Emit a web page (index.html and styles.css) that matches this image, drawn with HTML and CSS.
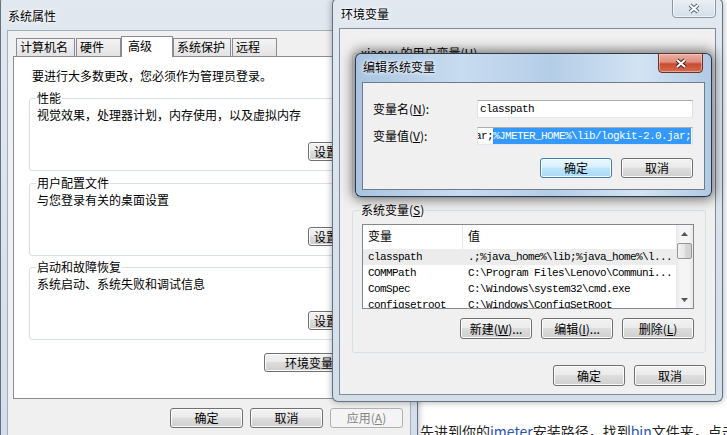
FILE: index.html
```html
<!DOCTYPE html>
<html lang="zh-CN">
<head>
    <meta charset="UTF-8">
    <title>环境变量</title>
    <link rel="stylesheet" href="styles.css">
</head>
<body>
    <!-- web page behind the dialogs -->
    <p class="page-text">先进到你的<a href="#">jmeter</a>安装路径，找到<a href="#">bin</a>文件夹，点击</p>

    <!-- 系统属性 -->
    <div class="win sys">
        <div class="titlebar"><span class="title">系统属性</span></div>
        <div class="client">
            <div class="tabs">
                <div class="tab t1">计算机名</div>
                <div class="tab t2">硬件</div>
                <div class="tab t3 active">高级</div>
                <div class="tab t4">系统保护</div>
                <div class="tab t5">远程</div>
            </div>
            <div class="panel">
                <p class="intro">要进行大多数更改，您必须作为管理员登录。</p>
                <fieldset class="group g1">
                    <legend>性能</legend>
                    <p>视觉效果，处理器计划，内存使用，以及虚拟内存</p>
                    <button class="btn">设置(<u>S</u>)...</button>
                </fieldset>
                <fieldset class="group g2">
                    <legend>用户配置文件</legend>
                    <p>与您登录有关的桌面设置</p>
                    <button class="btn">设置(<u>E</u>)...</button>
                </fieldset>
                <fieldset class="group g3">
                    <legend>启动和故障恢复</legend>
                    <p>系统启动、系统失败和调试信息</p>
                    <button class="btn">设置(<u>T</u>)...</button>
                </fieldset>
                <button class="btn env-btn">环境变量(<u>N</u>)...</button>
            </div>
            <div class="actions">
                <button class="btn">确定</button>
                <button class="btn">取消</button>
                <button class="btn" disabled>应用(<u>A</u>)</button>
            </div>
        </div>
    </div>

    <!-- 环境变量 -->
    <div class="win env">
        <div class="titlebar"><span class="title">环境变量</span></div>
        <button class="close-btn">
            <svg width="14" height="11" viewBox="0 0 14 11"><path d="M3 2 L11 9 M11 2 L3 9" stroke="#5d6b7a" stroke-width="4"/><path d="M3 2 L11 9 M11 2 L3 9" stroke="#fff" stroke-width="2"/></svg>
        </button>
        <div class="client">
            <fieldset class="group user-vars">
                <legend>xiaoyu 的用户变量(<u>U</u>)</legend>
                <div class="user-list"></div>
            </fieldset>
            <fieldset class="group sys-vars">
                <legend>系统变量(<u>S</u>)</legend>
                <div class="list">
                    <div class="list-body">
                        <div class="list-head"><span class="col-name">变量</span><span class="col-value">值</span></div>
                        <div class="list-row hot"><span class="col-name">classpath</span><span class="col-value">.;%java_home%\lib;%java_home%\l...</span></div>
                        <div class="list-row"><span class="col-name">COMMPath</span><span class="col-value">C:\Program Files\Lenovo\Communi...</span></div>
                        <div class="list-row"><span class="col-name">ComSpec</span><span class="col-value">C:\Windows\system32\cmd.exe</span></div>
                        <div class="list-row"><span class="col-name">configsetroot</span><span class="col-value">C:\Windows\ConfigSetRoot</span></div>
                    </div>
                    <div class="scrollbar">
                        <div class="sb-arrow"><svg width="7" height="4" viewBox="0 0 7 4"><path d="M0 4 L3.5 0 L7 4z" fill="#555"/></svg></div>
                        <div class="sb-thumb"></div>
                        <div class="sb-track"></div>
                        <div class="sb-arrow"><svg width="7" height="4" viewBox="0 0 7 4"><path d="M0 0 L3.5 4 L7 0z" fill="#555"/></svg></div>
                    </div>
                </div>
                <div class="btn-row">
                    <button class="btn">新建(<u>W</u>)...</button>
                    <button class="btn">编辑(<u>I</u>)...</button>
                    <button class="btn">删除(<u>L</u>)</button>
                </div>
            </fieldset>
            <div class="btn-row dialog-actions">
                <button class="btn">确定</button>
                <button class="btn">取消</button>
            </div>
        </div>
    </div>

    <!-- 编辑系统变量 -->
    <div class="win edit">
        <div class="titlebar"><span class="title">编辑系统变量</span></div>
        <button class="close-btn red">
            <svg width="14" height="11" viewBox="0 0 14 11"><path d="M3 2 L11 9 M11 2 L3 9" stroke="#4a2620" stroke-width="4"/><path d="M3 2 L11 9 M11 2 L3 9" stroke="#fff" stroke-width="2"/></svg>
        </button>
        <div class="client">
            <div class="field-grid">
                <label>变量名(<u>N</u>):</label>
                <div class="textbox"><span class="mono">classpath</span></div>
                <label>变量值(<u>V</u>):</label>
                <div class="textbox scrolled"><span class="mono">ar;</span><span class="mono sel">%JMETER_HOME%\lib/logkit-2.0.jar;</span></div>
            </div>
            <div class="btn-row">
                <button class="btn default">确定</button>
                <button class="btn">取消</button>
            </div>
        </div>
    </div>
</body>
</html>
```

FILE: styles.css
```css
body {
    margin: 0;
    width: 727px;
    height: 435px;
    overflow: hidden;
    position: relative;
    background-color: #fff;
    font-family: "Noto Sans CJK SC", sans-serif;
    font-size: 12px;
    line-height: 16px;
    color: #000;
}

u {
    text-decoration: underline;
}

.page-text {
    position: absolute;
    left: 420px;
    top: 421px;
    margin: 0;
    font-size: 14px;
    line-height: 20px;
    white-space: nowrap;
    color: #222;
}

.page-text a {
    color: #2a55b8;
    text-decoration: none;
}

.mono {
    font-family: "Liberation Mono", monospace;
    font-size: 11px;
    letter-spacing: -0.6px;
}

/* windows */
.win {
    position: absolute;
    box-sizing: border-box;
    display: flex;
    flex-direction: column;
    border: 1px solid rgba(60, 75, 95, 0.75);
    border-radius: 6px;
    background: linear-gradient(#e1e8f0, #d4dee9);
    box-shadow: 0 0 7px rgba(0, 0, 0, 0.35);
}

.titlebar {
    box-sizing: border-box;
    display: flex;
    align-items: center;
    flex-shrink: 0;
}

.title {
    color: #000;
    text-shadow: 0 0 6px #fff, 0 0 3px #fff;
}

.client {
    flex: 1;
    margin: 0 6px 6px;
    border: 1px solid #7f8b98;
    background-color: #f0f0f0;
    min-height: 0;
}

.close-btn {
    position: absolute;
    top: -1px;
    box-sizing: border-box;
    padding: 0;
    display: flex;
    align-items: center;
    justify-content: center;
    border: 1px solid #8a96a4;
    border-radius: 0 0 4px 4px;
    background: linear-gradient(#eaf0f5, #d5dee8);
    box-shadow: inset 0 0 0 1px rgba(255, 255, 255, 0.6);
}

.close-btn.red {
    border-color: #6b3028;
    background: linear-gradient(#eab0a4 0%, #de8d7c 45%, #c84a32 55%, #d36c4f 100%);
    box-shadow: inset 0 0 0 1px rgba(255, 220, 210, 0.5);
}

/* buttons */
.btn {
    box-sizing: border-box;
    width: 72px;
    height: 20px;
    padding: 0;
    font-family: "Noto Sans CJK SC", sans-serif;
    font-size: 12px;
    line-height: 16px;
    color: #000;
    white-space: nowrap;
    border: 1px solid #707070;
    border-radius: 3px;
    background: linear-gradient(#f2f2f2 0%, #ebebeb 45%, #dddddd 50%, #cfcfcf 100%);
    box-shadow: inset 0 0 0 1px #fbfbfb;
}

.btn.default {
    border-color: #3c7fb1;
    background: linear-gradient(#eaf6fd 0%, #d9f0fc 45%, #bee6fd 50%, #a7d9f5 100%);
    box-shadow: inset 0 0 0 1px #fff;
}

.btn:disabled {
    border-color: #adb2b5;
    background: #f4f4f4;
    color: #838383;
    box-shadow: none;
}

.btn-row {
    display: flex;
    justify-content: flex-end;
    gap: 9px;
}

/* groups */
.group {
    box-sizing: border-box;
    min-width: 0;
    margin: 0;
    padding: 0 6px 9px 6px;
    border: 1px solid #d5dfe5;
    border-radius: 3px;
}

.group legend {
    padding: 0 1px;
    line-height: 16px;
}

.group p {
    margin: 1px 0 0 1px;
    line-height: 16px;
}

/* 系统属性 */
.sys {
    left: 0;
    top: -4px;
    width: 418px;
    height: 450px;
}

.sys .titlebar {
    height: 33px;
    padding: 5px 0 0 7px;
}

.sys .client {
    border-color: #a3aebb;
    padding: 5px 5px 0 5px;
}

.tabs {
    display: flex;
    align-items: flex-end;
    height: 20px;
    padding-left: 3px;
}

.tab {
    box-sizing: border-box;
    height: 18px;
    padding-left: 3px;
    line-height: 16px;
    border: 1px solid #898c95;
    border-bottom: none;
    background: linear-gradient(#f4f4f4, #e2e2e2);
    white-space: nowrap;
}

.tab.active {
    position: relative;
    z-index: 1;
    height: 21px;
    margin-bottom: -1px;
    padding-left: 6px;
    line-height: 17px;
    background: #fff;
}

.t1 { width: 59px; }
.t2 { width: 45px; margin-left: 1px; }
.t3 { width: 52px; }
.t4 { width: 58px; }
.t5 { width: 45px; margin-left: 1px; }

.panel {
    box-sizing: border-box;
    height: 343px;
    padding: 11px 14px 0 15px;
    border: 1px solid #898c95;
    background-color: #fff;
}

.intro {
    margin: 0 0 0 3px;
}

.panel .group {
    width: 361px;
}

.g1 { margin-top: 6px; }
.g2 { margin-top: 4px; }
.g3 { margin-top: 3px; }

.panel .group .btn {
    display: block;
    width: 75px;
    height: 19px;
    margin: 19px 0 0 auto;
    padding-left: 5px;
    text-align: left;
}

.env-btn {
    display: block;
    width: 126px;
    height: 19px;
    margin: 13px 0 0 auto;
    padding-left: 20px;
    text-align: left;
}

.actions {
    display: flex;
    justify-content: flex-end;
    gap: 7px;
    margin-top: 9px;
    padding-right: 2px;
}

.actions .btn {
    width: 73px;
}

/* 环境变量 */
.env {
    left: 332px;
    top: -2px;
    width: 391px;
    height: 404px;
}

.env .titlebar {
    height: 29px;
    padding: 1px 0 0 8px;
}

.env .close-btn {
    right: 6px;
    width: 44px;
    height: 20px;
}

.env .client {
    padding: 16px 9px 0 12px;
}

.env .group {
    padding: 0 11px 13px 9px;
}

.env .group legend {
    margin-left: -2px;
}

.user-vars {
    padding-bottom: 0 !important;
}

.user-list {
    height: 136px;
}

.sys-vars {
    margin-top: 4px;
}

.list {
    box-sizing: border-box;
    display: flex;
    height: 85px;
    margin-top: 6px;
    border: 1px solid #828790;
    background-color: #fff;
}

.list-body {
    flex: 1;
    overflow: hidden;
}

.list-head {
    display: flex;
    height: 24px;
    line-height: 22px;
}

.list-head .col-name {
    border-right: 1px solid #e3e5e8;
}

.list-row {
    display: flex;
    height: 16px;
    line-height: 16px;
    font-family: "Liberation Mono", monospace;
    font-size: 11px;
    letter-spacing: -0.6px;
    white-space: nowrap;
}

.list-row.hot {
    background-color: #ececec;
}

.col-name {
    box-sizing: border-box;
    width: 100px;
    flex-shrink: 0;
    padding-left: 5px;
}

.col-value {
    padding-left: 5px;
}

.scrollbar {
    width: 17px;
    display: flex;
    flex-direction: column;
    background: linear-gradient(90deg, #e9e9e9, #f5f5f5 25%, #f5f5f5 75%, #e9e9e9);
}

.sb-arrow {
    height: 17px;
    display: flex;
    align-items: center;
    justify-content: center;
    flex-shrink: 0;
}

.sb-thumb {
    height: 16px;
    margin: 1px 1px 0;
    border: 1px solid #979797;
    border-radius: 2px;
    box-sizing: border-box;
    background: linear-gradient(90deg, #f2f2f2, #e6e6e6 50%, #d8d8d8 51%, #d0d0d0);
}

.sb-track {
    flex: 1;
}

.sys-vars .btn-row {
    margin-top: 9px;
}

.sys-vars .btn,
.dialog-actions .btn {
    height: 21px;
}

.dialog-actions {
    margin-top: 12px;
}

/* 编辑系统变量 */
.edit {
    left: 355px;
    top: 53px;
    width: 357px;
    height: 144px;
    border-color: rgba(20, 30, 45, 0.85);
    background: linear-gradient(90deg, #a8c4e1 0%, #c8dcf0 30%, #b4cde7 55%, #d3e3f3 80%, #b0cae5 100%);
    box-shadow: 0 0 12px 3px rgba(0, 0, 0, 0.5);
}

.edit .titlebar {
    height: 28px;
    padding: 0 0 2px 7px;
}

.edit .close-btn {
    right: 8px;
    width: 45px;
    height: 20px;
}

.edit .client {
    padding: 17px 11px 0 10px;
    border-color: #6f7b88;
}

.field-grid {
    display: grid;
    grid-template-columns: 104px 216px;
    grid-auto-rows: 18px;
    row-gap: 9px;
    align-items: center;
}

.textbox {
    box-sizing: border-box;
    height: 18px;
    display: flex;
    align-items: center;
    overflow: hidden;
    white-space: nowrap;
    padding: 0 1px 0 2px;
    border: 1px solid;
    border-color: #abadb3 #dbdfe6 #e3e9ef #e2e3ea;
    background-color: #fff;
}

.textbox span {
    flex-shrink: 0;
}

.textbox.scrolled {
    justify-content: flex-end;
}

.sel {
    background-color: #3399ff;
    color: #fff;
    line-height: 16px;
}

.edit .btn-row {
    margin-top: 13px;
}
```
